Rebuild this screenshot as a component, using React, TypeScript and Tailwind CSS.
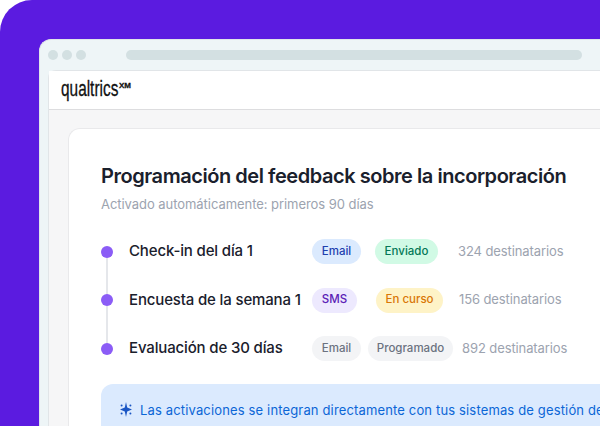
import React from 'react';

interface StepRow {
  title: string;
  channel: string;
  channelClass: string;
  status: string;
  statusClass: string;
  recipients: string;
  rowClass: string;
}

const rows: StepRow[] = [
  {
    title: 'Check-in del día 1',
    channel: 'Email',
    channelClass: 'bg-[#dbeafe] text-[#1e40af] w-[49px]',
    status: 'Enviado',
    statusClass: 'bg-[#d1fae5] text-[#047857] w-[63px] ml-[14px]',
    recipients: '324 destinatarios',
    rowClass: 'ml-[20px]',
  },
  {
    title: 'Encuesta de la semana 1',
    channel: 'SMS',
    channelClass: 'bg-[#ede9fe] text-[#5b21b6] w-[45px]',
    status: 'En curso',
    statusClass: 'bg-[#fef3c7] text-[#d97706] w-[67px] ml-[19px]',
    recipients: '156 destinatarios',
    rowClass: 'ml-[16px]',
  },
  {
    title: 'Evaluación de 30 días',
    channel: 'Email',
    channelClass: 'bg-[#f3f4f6] text-[#6b7280] w-[49px]',
    status: 'Programado',
    statusClass: 'bg-[#f3f4f6] text-[#6b7280] w-[85px] ml-[7px]',
    recipients: '892 destinatarios',
    rowClass: 'ml-[9px]',
  },
];

const Pill = ({ label, className }: { label: string; className: string }) => (
  <span className={`flex h-[25px] shrink-0 items-center justify-center rounded-full text-[11.5px] font-medium ${className}`}>
    {label}
  </span>
);

export default function App() {
  return (
    <div className="h-[426px] w-[600px] overflow-hidden bg-white font-['Inter',sans-serif]">
      <div className="h-full rounded-tl-[32px] bg-[#5b1be0] pl-[39px] pt-[39px]">
        <div className="h-[420px] w-[600px] rounded-tl-[12px] border-l border-t border-[#dfe5e8] bg-[#eef5f7] pl-[8px]">
          {/* window chrome */}
          <div className="flex h-[30px] items-center">
            <div className="flex gap-[4px]">
              <span className="h-[10px] w-[10px] rounded-full bg-[#d3e0e2]" />
              <span className="h-[10px] w-[10px] rounded-full bg-[#d3e0e2]" />
              <span className="h-[10px] w-[10px] rounded-full bg-[#d3e0e2]" />
            </div>
            <div className="ml-[40px] h-[10px] w-[456px] rounded-full bg-[#d3e0e2]" />
          </div>

          <div className="h-[400px] rounded-tl-[8px] border-l border-t border-[#e1e5e8] bg-[#f6f6f7]">
            {/* logo bar */}
            <div className="flex h-[39px] items-center border-b border-[#dddddf] bg-white pl-[12px]">
              <span className="w-[58px] whitespace-nowrap">
                <span className="inline-block origin-left scale-x-[0.7] font-['Liberation_Sans',sans-serif] text-[22px] leading-none text-[#111111] [-webkit-text-stroke:0.3px_#111111]">
                  qualtrics
                </span>
              </span>
              <span className="mb-[9px] font-['Liberation_Sans',sans-serif] text-[8px] font-bold leading-none text-[#111111] [-webkit-text-stroke:0.3px_#111111]">
                XM
              </span>
            </div>

            {/* feedback card */}
            <div className="ml-[19px] mt-[18px] h-[320px] rounded-tl-[12px] border-l border-t border-[#e9e9eb] bg-white pl-[32px] pt-[33px]">
              <h1 className="whitespace-nowrap text-[20px] font-semibold leading-[28px] tracking-[-0.45px] text-[#1a202c]">
                Programación del feedback sobre la incorporación
              </h1>
              <p className="mt-[4px] whitespace-nowrap text-[13px] leading-[20px] tracking-[-0.05px] text-[#9ca3af]">
                Activado automáticamente: primeros 90 días
              </p>

              <div className="relative mt-[25px] flex flex-col gap-[23.5px]">
                <div className="absolute left-[5px] top-[12px] h-[97px] w-[2px] bg-[#e5e7eb]" />
                {rows.map((row) => (
                  <div key={row.title} className="relative flex h-[25px] items-center">
                    <span className="h-[12px] w-[12px] shrink-0 rounded-full bg-[#8b5cf6]" />
                    <span className="ml-[16px] w-[183px] shrink-0 whitespace-nowrap text-[15px] font-medium tracking-[-0.15px] text-[#1a202c]">
                      {row.title}
                    </span>
                    <Pill label={row.channel} className={row.channelClass} />
                    <Pill label={row.status} className={row.statusClass} />
                    <span className={`shrink-0 whitespace-nowrap text-[13px] tracking-[-0.1px] text-[#9ca3af] ${row.rowClass}`}>
                      {row.recipients}
                    </span>
                  </div>
                ))}
              </div>

              <div className="mt-[23px] flex h-[56px] w-[560px] items-start rounded-[12px] bg-[#dbeafe] pl-[18px] pt-[16px]">
                <svg width="14" height="15" viewBox="0 0 14 15" className="mt-[2px] shrink-0 text-[#1a56c4]" fill="currentColor">
                  <path d="M7 0 8.2 5.6 13 7.5 8.2 9.4 7 15 5.8 9.4 1 7.5 5.8 5.6z" />
                  <circle cx="2.6" cy="3.4" r="1" />
                  <circle cx="11.4" cy="3.4" r="1" />
                  <circle cx="2.6" cy="11.6" r="1" />
                  <circle cx="11.4" cy="11.6" r="1" />
                </svg>
                <span className="ml-[7px] whitespace-nowrap text-[13px] leading-[20px] tracking-[0.15px] text-[#0b66d6]">
                  Las activaciones se integran directamente con tus sistemas de gestión de
                </span>
              </div>
            </div>
          </div>
        </div>
      </div>
    </div>
  );
}
